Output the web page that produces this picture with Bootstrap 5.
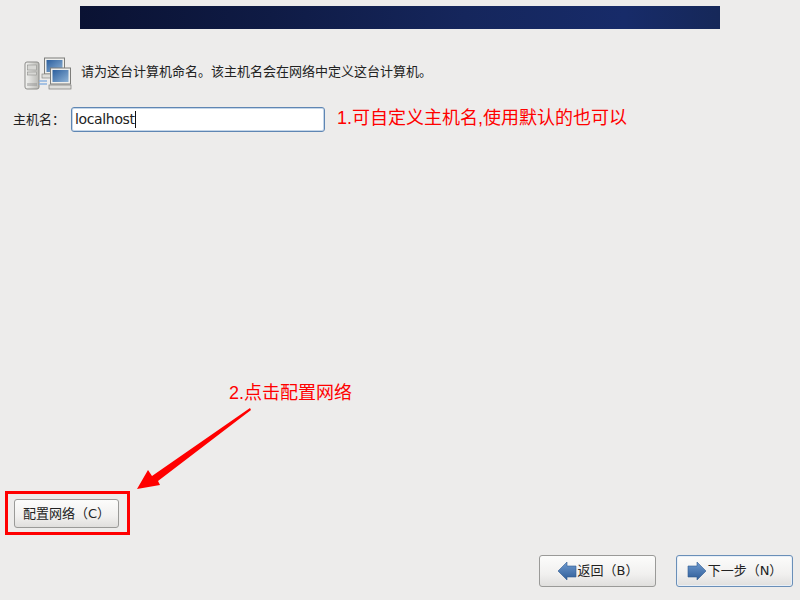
<!DOCTYPE html>
<html lang="zh">
<head>
<meta charset="utf-8">
<title>主机名</title>
<link href="https://cdn.jsdelivr.net/npm/bootstrap@5.3.0/dist/css/bootstrap.min.css" rel="stylesheet">
<style>
html,body{height:100%;margin:0}
body{background:#edeceb;font-family:"DejaVu Sans","Noto Sans CJK SC",sans-serif;color:#222;font-size:13px;overflow:hidden}
.stage{position:relative;width:800px;height:600px;display:flex;flex-direction:column}
.banner{width:640px;height:23px;margin:6px auto 0;background:linear-gradient(90deg,#0a1233 0%,#0f1b45 30%,#15265c 60%,#172b69 85%,#162859 100%)}
.intro{padding:28px 0 0 24px;height:43px;gap:9px;box-sizing:content-box;line-height:1}
.intro-text{font-size:13px;margin-top:8px;white-space:nowrap}
.host-row{padding-left:13px;margin-top:7px;height:25px}
.host-label{width:58px;font-size:13px;white-space:nowrap}
.host-input{width:254px;height:25px;border:1px solid #5f86b3;border-radius:3px;background:#fff;padding:0 3px;font-size:14px;line-height:23px;color:#222;box-shadow:inset 0 0 0 1px #c5d6e8;letter-spacing:-.35px}
.caret-bar{display:inline-block;width:1px;height:17px;background:#111;vertical-align:-4px}
.spacer{flex:1}
.gtk-btn{display:flex;align-items:center;justify-content:center;background:linear-gradient(180deg,#fcfcfb 0%,#f1f0ef 60%,#e0dfdd 100%);border:1px solid #9a9a98;border-radius:3px;color:#222;font-size:13px;padding:0;white-space:nowrap}
.net-btn{width:105px;height:29px;margin:0 0 72px 14px}
.foot-row{position:absolute;left:539px;top:555px;gap:20px}
.nav-btn{width:117px;height:32px;gap:1px}
.nav-btn.active-btn{border-color:#6a8fb8;box-shadow:inset 0 0 0 1px #e8eff7}
.note{position:absolute;color:#f00;font-family:"Liberation Sans","Noto Sans CJK SC",sans-serif;font-size:18px;line-height:1;white-space:nowrap}
.note-a{left:337px;top:109px}
.note-b{left:229px;top:384px}
.red-frame{position:absolute;left:5px;top:491px;width:125px;height:44px;border:3px solid #f00}
.arrow{position:absolute;left:130px;top:400px}
</style>
</head>
<body>
<div class="stage">
  <div class="banner"></div>
  <div class="intro d-flex align-items-start">
    <svg width="48" height="34" viewBox="0 0 48 34">
      <defs>
        <linearGradient id="scr" x1="0" y1="0" x2="1" y2="1"><stop offset="0" stop-color="#2c5f9e"/><stop offset="1" stop-color="#8fb3d6"/></linearGradient>
        <linearGradient id="tower" x1="0" y1="0" x2="1" y2="0"><stop offset="0" stop-color="#f4f4f2"/><stop offset="1" stop-color="#b9b9b5"/></linearGradient>
      </defs>
      <rect x="1" y="5" width="14" height="27" rx="2" fill="url(#tower)" stroke="#8b8b88"/>
      <rect x="3.500" y="8" width="9" height="5" fill="#d7d7d4" stroke="#8f8f8c" stroke-width=".6"/>
      <rect x="3.500" y="15" width="9" height="3" fill="#d7d7d4" stroke="#8f8f8c" stroke-width=".6"/>
      <path d="M4 26v3M6 26v3M8 26v3M10 26v3M12 26v3" stroke="#888" stroke-width=".8"/>
      <path d="M15 24h8M15 27h8" stroke="#8db3e0" stroke-width="1.500"/>
      <rect x="20.500" y="1" width="20" height="16" fill="#efefec" stroke="#7d7d7a"/>
      <rect x="22.500" y="3" width="16" height="12" fill="url(#scr)"/>
      <rect x="18" y="17" width="16" height="4" fill="#dededb" stroke="#8a8a87" stroke-width=".7"/>
      <rect x="26.500" y="11" width="20" height="16" fill="#efefec" stroke="#7d7d7a"/>
      <rect x="28.500" y="13" width="16" height="12" fill="url(#scr)"/>
      <rect x="25" y="28" width="22" height="4" fill="#dededb" stroke="#7d7d7a" stroke-width=".7"/>
    </svg>
    <div class="intro-text">请为这台计算机命名。该主机名会在网络中定义这台计算机。</div>
  </div>
  <div class="host-row d-flex align-items-center">
    <label class="host-label" for="hn">主机名：</label>
    <div class="host-input" id="hn">localhost<span class="caret-bar"></span></div>
  </div>
  <div class="spacer"></div>
  <button type="button" class="gtk-btn net-btn">配置网络（C）</button>
  <div class="foot-row d-flex">
    <button type="button" class="gtk-btn nav-btn">
      <svg width="20" height="20" viewBox="0 0 20 20"><defs><linearGradient id="ar" x1="0" y1="0" x2="0" y2="1"><stop offset="0" stop-color="#6f9bd0"/><stop offset="1" stop-color="#2f5d98"/></linearGradient></defs><path d="M1 10 10 1v4h9v11h-9v3z" fill="url(#ar)" stroke="#305a90" stroke-width=".6"/></svg>
      <span>返回（B）</span>
    </button>
    <button type="button" class="gtk-btn nav-btn active-btn">
      <svg width="20" height="20" viewBox="0 0 20 20"><path d="M19 10 10 1v4H1v11h9v3z" fill="url(#ar)" stroke="#305a90" stroke-width=".6"/></svg>
      <span>下一步（N）</span>
    </button>
  </div>
  <div class="note note-a">1.可自定义主机名,使用默认的也可以</div>
  <div class="note note-b">2.点击配置网络</div>
  <div class="red-frame"></div>
  <svg class="arrow" width="130" height="95" viewBox="130 400 130 95">
    <path d="M250 408 251 410 158 481 160 485 137 489 148 470 152 476Z" fill="#f00"/>
  </svg>
</div>
</body>
</html>
